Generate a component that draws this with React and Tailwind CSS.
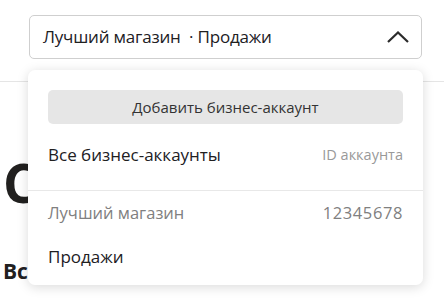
import React from "react";

const ChevronUp = () => (
  <svg width="22" height="12" viewBox="0 0 22 12" fill="none">
    <path d="M1 11L11 1.5L21 11" stroke="#2b2b2b" strokeWidth="2.2" />
  </svg>
);

const App = () => {
  return (
    <div
      className="relative w-[444px] h-[302px] overflow-hidden bg-white text-[#21201f]"
      style={{ fontFamily: '"Open Sans", "Noto Sans", sans-serif' }}
    >
      {/* Header with select */}
      <div className="pt-[15px] pl-[29px] h-[82px] border-b border-[#e5e5e5]">
        <div className="w-[393px] h-[44px] border border-[#cfcfcf] rounded-[5px] flex items-center justify-between pl-[13px] pr-[12px]">
          <span className="text-[17px] tracking-[-0.2px] whitespace-pre">Лучший магазин  · Продажи</span>
          <ChevronUp />
        </div>
      </div>

      {/* Page content behind dropdown */}
      <div className="pl-[3px]">
        <h1 className="text-[53px] font-bold leading-none mt-[74px]">Сводка</h1>
        <h2 className="text-[21px] font-bold leading-none mt-[52px]">Все бизнес-аккаунты</h2>
      </div>

      {/* Dropdown */}
      <div className="absolute left-[28px] top-[70px] w-[395px] h-[215px] bg-white rounded-[7px] shadow-[0_2px_12px_rgba(0,0,0,0.15)]">
        <div className="px-[20px] pt-[20px]">
          <button className="w-full h-[34px] rounded-[5px] bg-[#e6e6e6] text-[15px] text-[#333] flex items-center justify-center">
            Добавить бизнес-аккаунт
          </button>
          <div className="h-[66px] flex items-center justify-between pb-[4px]">
            <span className="text-[17px]">Все бизнес-аккаунты</span>
            <span className="text-[14.5px] text-[#999]">ID аккаунта</span>
          </div>
        </div>
        <div className="h-px bg-[#e8e8e8]" />
        <div className="px-[20px]">
          <div className="h-[44px] flex items-center justify-between">
            <span className="text-[16.5px] text-[#808080]">Лучший магазин</span>
            <span className="text-[16.5px] text-[#808080] tracking-[0.6px]">12345678</span>
          </div>
          <div className="h-[44px] flex items-center">
            <span className="text-[17px]">Продажи</span>
          </div>
        </div>
      </div>
    </div>
  );
};

export default App;
